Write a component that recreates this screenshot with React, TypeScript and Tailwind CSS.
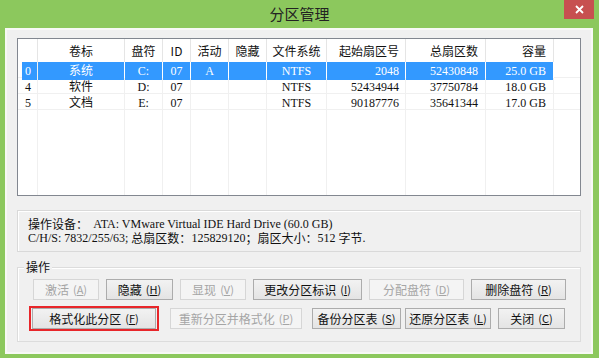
import React from "react";

interface Part {
  n: string;
  label: string;
  drive: string;
  id: string;
  act: string;
  fs: string;
  start: string;
  total: string;
  size: string;
  sel?: boolean;
}

const PARTS: Part[] = [
  { n: "0", label: "系统", drive: "C:", id: "07", act: "A", fs: "NTFS", start: "2048", total: "52430848", size: "25.0 GB", sel: true },
  { n: "4", label: "软件", drive: "D:", id: "07", act: "", fs: "NTFS", start: "52434944", total: "37750784", size: "18.0 GB" },
  { n: "5", label: "文档", drive: "E:", id: "07", act: "", fs: "NTFS", start: "90187776", total: "35641344", size: "17.0 GB" },
];

const HEADERS = ["", "卷标", "盘符", "ID", "活动", "隐藏", "文件系统", "起始扇区号", "总扇区数", "容量", ""];

// column alignment, one per column
const ALIGN = [
  "justify-start",
  "justify-center",
  "justify-center",
  "justify-center",
  "justify-center",
  "justify-center",
  "justify-center",
  "justify-end pr-[6px]",
  "justify-end pr-[7px]",
  "justify-end pr-[7px]",
  "",
];

const GRID = "grid grid-cols-[20px_87px_38px_28px_38px_38px_60px_79px_80px_68px_1fr]";
const CJK = "font-['Noto_Sans_CJK_SC',sans-serif]";
const SERIF = "font-['Liberation_Serif','Noto_Sans_CJK_SC',serif]";
const CJK_INLINE = `${CJK} inline-block h-[14px] leading-[14px] align-top`;

function Row({ p }: { p: Part }): React.ReactElement {
  const cells = [p.n, p.label, p.drive, p.id, p.act, "", p.fs, p.start, p.total, p.size, ""];
  return (
    <div className={`${GRID} h-[16px] border-b border-[#f0f0f0]`}>
      {cells.map((c, i) => {
        const last = i === cells.length - 1;
        const hl = p.sel && !last;
        if (i === 0) {
          return (
            <div key={i} className="flex border-r border-[#f0f0f0]">
              <div className={`ml-[4px] flex-1 flex items-center pl-[3px] ${hl ? "bg-[#3399ff] text-white" : ""}`}>{c}</div>
            </div>
          );
        }
        return (
          <div
            key={i}
            className={`flex items-center ${ALIGN[i]} ${last ? "" : "border-r"} ${
              hl ? "bg-[#3399ff] text-white border-white" : "border-[#f0f0f0]"
            }`}
          >
            {c}
          </div>
        );
      })}
    </div>
  );
}

function Btn({ label, k, w, disabled }: { label: string; k: string; w: string; disabled?: boolean }): React.ReactElement {
  return (
    <div
      className={`${w} h-[21px] flex items-center justify-center border text-[12px] ${CJK} ${
        disabled
          ? "border-[#d6d6d6] bg-[#f4f4f4] text-[#a5a5a5]"
          : "border-[#acacac] bg-gradient-to-b from-[#f2f2f2] to-[#e4e4e4] text-[#111]"
      }`}
    >
      <span>{label}</span>
      <span className="ml-[4px] text-[11px]">
        (<span className="underline">{k}</span>)
      </span>
    </div>
  );
}

export default function App(): React.ReactElement {
  return (
    <div className="w-[599px] h-[358px] bg-[#8cc85d] flex flex-col overflow-hidden">
      {/* Title bar */}
      <div className="h-[28px] grid grid-cols-[1fr_auto_1fr] items-start">
        <div />
        <div className={`h-[28px] flex items-center text-[15px] text-[#222] ${CJK}`}>分区管理</div>
        <div className="flex justify-end pr-[5px]">
          <div className="w-[30px] h-[19px] bg-[#c75050] flex items-center justify-center">
            <svg width="9" height="9" viewBox="0 0 9 9">
              <path d="M1 1 L8 8 M8 1 L1 8" stroke="#fff" strokeWidth="1.8" />
            </svg>
          </div>
        </div>
      </div>

      {/* Client area */}
      <div className="flex-1 ml-[5px] mr-[6px] mb-[4px] bg-[#f0f0f0] border-2 border-[#f7f9f5] px-[10px] pt-[8px] flex flex-col">
        {/* List */}
        <div className={`h-[158px] border border-[#828790] bg-white flex flex-col text-[12px] text-[#111] ${SERIF}`}>
          <div className={`${GRID} h-[23px]`}>
            {HEADERS.map((h, i) => (
              <div
                key={i}
                className={`flex items-center ${ALIGN[i]} ${CJK} ${i === HEADERS.length - 1 ? "" : "border-r border-[#e5e5e5]"}`}
              >
                {h}
              </div>
            ))}
          </div>
          {PARTS.map(p => (
            <Row key={p.n} p={p} />
          ))}
          <div className={`${GRID} flex-1`}>
            {HEADERS.map((_, i) => (
              <div key={i} className={i === HEADERS.length - 1 ? "" : "border-r border-[#f0f0f0]"} />
            ))}
          </div>
        </div>

        {/* Device info */}
        <div
          className={`mt-[14px] h-[42px] border border-[#d9d9d9] shadow-[inset_1px_1px_0_#fff] pl-[10px] pt-[6px] text-[12px] leading-[14px] text-[#111] whitespace-pre ${SERIF}`}
        >
          <div className="h-[14px]">
            <span className={CJK_INLINE}>操作设备：</span>
            {"  ATA: VMware Virtual IDE Hard Drive (60.0 GB)"}
          </div>
          <div className="h-[14px]">
            {"C/H/S: 7832/255/63; "}
            <span className={CJK_INLINE}>总扇区数：</span>
            {"125829120"}
            <span className={CJK_INLINE}>；扇区大小：</span>
            {"512 "}
            <span className={CJK_INLINE}>字节</span>.
          </div>
        </div>

        {/* Operations group */}
        <div className="mt-[15px] h-[75px] border border-[#dcdcdc] shadow-[inset_1px_1px_0_#fff] flex flex-col">
          <div className={`-mt-[9px] ml-[6px] w-fit h-[16px] px-[2px] bg-[#f0f0f0] text-[12px] leading-[16px] text-[#111] ${CJK}`}>
            操作
          </div>
          <div className="mt-[4px] pl-[15px] flex gap-[7px]">
            <Btn label="激活" k="A" w="w-[66px]" disabled />
            <Btn label="隐藏" k="H" w="w-[67px]" />
            <Btn label="显现" k="V" w="w-[66px]" disabled />
            <Btn label="更改分区标识" k="I" w="w-[109px]" />
            <Btn label="分配盘符" k="D" w="w-[95px]" disabled />
            <Btn label="删除盘符" k="R" w="w-[95px]" />
          </div>
          <div className="mt-[6px] pl-[11px] flex items-center">
            <div className="border-2 border-[#e8262a] px-[1px] py-[0px]">
              <Btn label="格式化此分区" k="F" w="w-[124px]" />
            </div>
            <div className="ml-[11px]">
              <Btn label="重新分区并格式化" k="P" w="w-[132px]" disabled />
            </div>
            <div className="ml-[10px]">
              <Btn label="备份分区表" k="S" w="w-[89px]" />
            </div>
            <div className="ml-[4px]">
              <Btn label="还原分区表" k="L" w="w-[86px]" />
            </div>
            <div className="ml-[7px]">
              <Btn label="关闭" k="C" w="w-[67px]" />
            </div>
          </div>
        </div>
      </div>
    </div>
  );
}
